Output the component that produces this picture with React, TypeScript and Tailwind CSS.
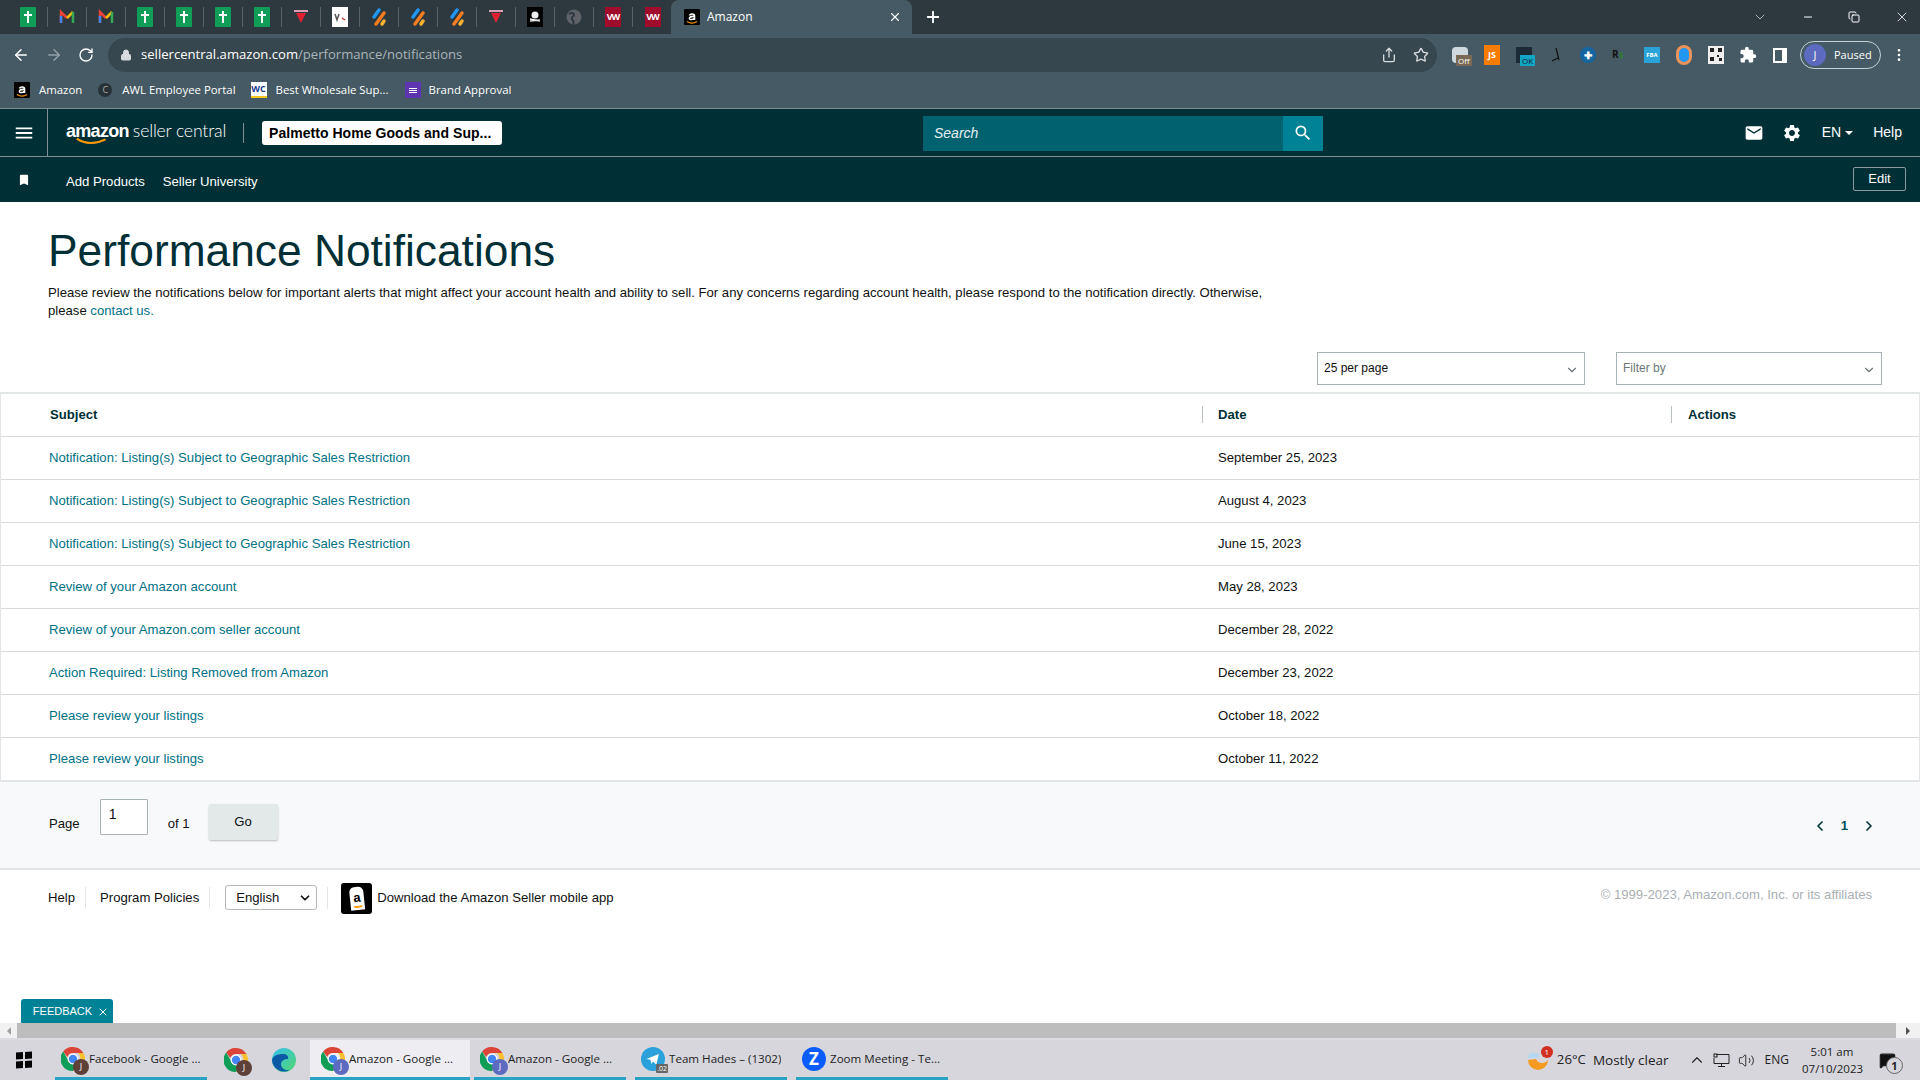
import React from "react";
import {
  ArrowLeft,
  ArrowRight,
  RotateCw,
  Lock,
  Star,
  Share,
  ChevronDown,
  ChevronLeft,
  ChevronRight,
  ChevronUp,
  Minus,
  X,
  Plus,
  Copy,
  MoreVertical,
  Volume2,
  MessageSquare,
} from "lucide-react";
import { MdBookmark, MdEmail, MdExtension, MdMenu, MdSearch, MdSettings } from "react-icons/md";

const ROWS = [
  ["Notification: Listing(s) Subject to Geographic Sales Restriction", "September 25, 2023"],
  ["Notification: Listing(s) Subject to Geographic Sales Restriction", "August 4, 2023"],
  ["Notification: Listing(s) Subject to Geographic Sales Restriction", "June 15, 2023"],
  ["Review of your Amazon account", "May 28, 2023"],
  ["Review of your Amazon.com seller account", "December 28, 2022"],
  ["Action Required: Listing Removed from Amazon", "December 23, 2022"],
  ["Please review your listings", "October 18, 2022"],
  ["Please review your listings", "October 11, 2022"],
];

const TABS = ["sheet", "gmail", "gmail", "sheet", "sheet", "sheet", "sheet", "tri", "doc", "stripe", "stripe", "stripe", "tri", "skull", "globe", "vw", "vw"];

const AmazonFavicon = ({ size = 16 }: { size?: number }) => (
  <div className="flex items-center justify-center bg-black shrink-0 rounded-[1px]" style={{ width: size, height: size }}>
    <svg viewBox="0 0 16 16" className="w-full h-full">
      <path d="M5.5 6.5c.5-2 5-2.2 5 .3v4.200M10.500 7.500c-4-.5-5.500 1-5 2.300.5 1.200 3.800 1 5-1" fill="none" stroke="#fff" strokeWidth="1.600" />
      <path d="M3 12.500c3 2 7 2 10 0" fill="none" stroke="#f90" strokeWidth="1.200" />
    </svg>
  </div>
);

const TabIcon = ({ kind }: { kind: string }) => {
  if (kind === "sheet")
    return (
      <div className="w-4 h-5 bg-[#0f9d58] rounded-[1px] flex items-center justify-center">
        <svg viewBox="0 0 16 20" className="w-4 h-5">
          <path d="M4 8h8M8 4v12" stroke="#fff" strokeWidth="2" />
        </svg>
      </div>
    );
  if (kind === "gmail")
    return (
      <svg viewBox="0 0 16 14" className="w-4 h-4">
        <path d="M2 13V2l6 6" fill="none" stroke="#ea4335" strokeWidth="2.500" />
        <path d="M8 8l6-6" fill="none" stroke="#fbbc04" strokeWidth="2.500" />
        <path d="M14 2v11" stroke="#34a853" strokeWidth="2.500" />
        <path d="M2 6v7" stroke="#4285f4" strokeWidth="2.500" />
      </svg>
    );
  if (kind === "tri")
    return (
      <svg viewBox="0 0 16 16" className="w-4 h-4">
        <rect x="1" y="1" width="14" height="2" fill="#d8a0b0" />
        <path d="M3 4h10l-5 10z" fill="#e02030" />
      </svg>
    );
  if (kind === "doc")
    return (
      <div className="w-4 h-5 bg-white flex items-center justify-center">
        <svg viewBox="0 0 16 20" className="w-4 h-5">
          <path d="M3 7l2 6 2-6" fill="none" stroke="#555" strokeWidth="1.500" />
          <path d="M10 11l3 2" stroke="#c33" strokeWidth="1.500" />
        </svg>
      </div>
    );
  if (kind === "stripe")
    return (
      <svg viewBox="0 0 16 20" className="w-4 h-5">
        <path d="M3 10l5-7" stroke="#2196f3" strokeWidth="3.500" strokeLinecap="round" />
        <path d="M5 17l8-11" stroke="#f57c20" strokeWidth="3.500" strokeLinecap="round" />
        <path d="M11 17l2-3" stroke="#f9b233" strokeWidth="3.500" strokeLinecap="round" />
      </svg>
    );
  if (kind === "skull")
    return (
      <div className="w-4 h-5 bg-black flex items-center justify-center">
        <svg viewBox="0 0 16 20" className="w-4 h-5">
          <circle cx="8" cy="8" r="3.500" fill="#eee" />
          <path d="M3 14l10-1M3 12l10 2" stroke="#eee" strokeWidth="1.500" />
        </svg>
      </div>
    );
  if (kind === "globe")
    return (
      <svg viewBox="0 0 16 16" className="w-4 h-4">
        <circle cx="8" cy="8" r="7.500" fill="#5f6368" />
        <path d="M3 5c3-2 5-1 5 1s-3 1-2 4 3 3 1 5" fill="none" stroke="#2d393f" strokeWidth="2" />
      </svg>
    );
  return (
    <div className="w-4 h-5 bg-[#a00d2c] flex items-center justify-center text-[9px] font-bold tracking-[-1px] text-white">VW</div>
  );
};

const ChromeIcon = ({ badge = "#5c6bc0" }: { badge?: string }) => (
  <div className="relative w-6 h-6 shrink-0">
    <svg viewBox="0 0 24 24" className="w-6 h-6">
      <path d="M12 0a12 12 0 0 1 10.400 6H12a6 6 0 0 0-5.700 4L2.200 4.500A12 12 0 0 1 12 0z" fill="#db4437" />
      <path d="M22.400 6A12 12 0 0 1 12 24l5-8.500a6 6 0 0 0 0-9.500z" fill="#fbc02d" />
      <path d="M2.200 4.500L7 13a6 6 0 0 0 10 2.500L12 24A12 12 0 0 1 2.200 4.500z" fill="#0f9d58" />
      <circle cx="12" cy="12" r="4.800" fill="#4285f4" stroke="#fff" strokeWidth="1.200" />
    </svg>
    <div className="absolute -right-1 -bottom-1 w-4 h-4 rounded-full flex items-center justify-center text-[9px] text-white" style={{ backgroundColor: badge }}>J</div>
  </div>
);

const TaskItem = ({ w, pl, active, icon, label }: { w: string; pl: string; active?: boolean; icon: React.ReactNode; label: string }) => (
  <div className={`${w} ${pl} ${active ? "bg-[#eeeef2]" : ""} h-10 flex items-center gap-[4px] border-b-[3px] border-[#29a3c4] shrink-0`}>
    {icon}
    <span className="text-[11.600px] text-[#222] whitespace-nowrap overflow-hidden">{label}</span>
  </div>
);

const BrowserChrome = () => (
  <div className="shrink-0 font-['Open_Sans',sans-serif]">
    {/* tab strip */}
    <div className="h-[34px] bg-[#2d393f] flex items-center pl-[9px] text-white">
      <div className="flex items-center h-full">
        {TABS.map((kind, i) => (
          <div key={i} className="w-[39px] h-[20px] flex items-center justify-center border-r border-[#55646b] last:border-r-0">
            <TabIcon kind={kind} />
          </div>
        ))}
      </div>
      <div className="w-[241px] -ml-px h-full bg-[#455a64] rounded-t-lg flex items-center pl-[13px] pr-[10px] gap-[7px]">
        <AmazonFavicon />
        <span className="text-xs flex-1">Amazon</span>
        <X className="w-3.5 h-3.5" />
      </div>
      <Plus className="w-[18px] h-[18px] ml-3" strokeWidth={2.500} />
      <div className="ml-auto flex items-center gap-[34px] pr-[10px]">
        <ChevronDown className="w-4 h-4 text-[#c8d0d4]" strokeWidth={1.200} />
        <Minus className="w-3 h-3" />
        <Copy className="w-3 h-3" />
        <X className="w-4 h-4" strokeWidth={1.200} />
      </div>
    </div>
    {/* address row */}
    <div className="h-[38px] bg-[#455a64] flex items-end text-white">
      <div className="flex items-center h-[34px] pl-[12px] gap-[15px] w-[108px]">
        <ArrowLeft className="w-[18px] h-[18px]" />
        <ArrowRight className="w-[18px] h-[18px] text-[#93a1a8]" />
        <RotateCw className="w-4 h-4" />
      </div>
      <div className="w-[1329px] h-[34px] bg-[#37474f] rounded-full flex items-center pl-[12px] pr-[8px]">
        <Lock className="w-3 h-3 text-[#d5dbde] mr-[9px]" fill="#d5dbde" />
        <span className="text-[13.100px]">sellercentral.amazon.com<span className="text-[#a9b5ba]">/performance/notifications</span></span>
        <div className="ml-auto flex items-center gap-[16px]">
          <Share className="w-4 h-4 text-[#d5dbde]" />
          <Star className="w-4 h-4 text-[#d5dbde]" />
        </div>
      </div>
      <div className="flex-1 h-[34px] flex items-center pl-[15px] gap-[16px]">
        <div className="relative w-4 h-4 rounded-sm bg-[#cfd8dc] shrink-0">
          <div className="absolute left-1 top-[8px] bg-[#7a6a55] text-[8px] leading-[11px] px-[2px]">Off</div>
        </div>
        <div className="w-4 h-5 bg-[#f57c00] text-[9px] font-bold flex items-center justify-center shrink-0">JS</div>
        <div className="relative w-4 h-4 bg-[#1c2a35] shrink-0">
          <div className="absolute left-1 top-[8px] bg-[#12a5c4] text-[#123] text-[8px] leading-[11px] px-[2px]">OK</div>
        </div>
        <svg viewBox="0 0 16 16" className="w-4 h-4 shrink-0"><path d="M8 1l3 12M4 14l6-3" stroke="#111" strokeWidth="1.200" /></svg>
        <div className="w-4 h-4 rounded-full bg-[#1565a0] text-[10px] leading-4 text-center font-bold shrink-0">✚</div>
        <div className="w-4 h-4 text-[#111] text-[10px] font-bold shrink-0">R<span className="text-[#2e7d32]">s</span></div>
        <div className="w-4 h-4 bg-[#29a3d8] text-[6px] leading-4 text-center font-bold shrink-0">FBA</div>
        <div className="w-4 h-5 rounded-full bg-[#2196f3] border-[3px] border-[#e8935a] shrink-0" />
        <svg viewBox="0 0 16 18" className="w-4 h-[18px] shrink-0">
          <rect width="16" height="18" fill="#eee" />
          <path d="M2 2h4v4H2zM10 2h4v4h-4zM2 11h4v4H2zM9 9h2v2H9zM11 12h3v3h-3z" fill="#222" />
        </svg>
        <MdExtension className="w-[18px] h-[18px] shrink-0 -ml-px" />
        <div className="w-[14px] h-[15px] border-2 border-white border-r-[5px] shrink-0" />
        <div className="w-[81px] h-[28px] border border-[#c5d3d8] rounded-full flex items-center pl-[3px] gap-2 text-[11px] shrink-0 -ml-[3px]">
          <div className="w-[22px] h-[22px] rounded-full bg-[#5c6bc0] flex items-center justify-center">J</div>
          Paused
        </div>
        <MoreVertical className="w-4 h-4 shrink-0 -ml-[6px]" />
      </div>
    </div>
    {/* bookmarks */}
    <div className="h-[36px] bg-[#455a64] flex items-center pl-[14px] text-[11.400px] text-white">
      <AmazonFavicon />
      <span className="ml-[9px]">Amazon</span>
      <div className="ml-[16px] w-[14px] h-[14px] rounded-full bg-[#263238] text-[9px] text-center leading-[14px] text-[#aaa]">C</div>
      <span className="ml-[10px]">AWL Employee Portal</span>
      <div className="ml-[15px] w-4 h-4 bg-white text-[#1a3a8f] text-[9px] font-bold leading-[14px] text-center border-b-2 border-[#f5c518]">WC</div>
      <span className="ml-[9px]">Best Wholesale Sup...</span>
      <div className="ml-[16px] w-4 h-4 bg-[#5e35b1] flex flex-col justify-center items-center gap-px">
        <div className="w-2 h-px bg-white" />
        <div className="w-2 h-px bg-white" />
        <div className="w-2 h-px bg-white" />
      </div>
      <span className="ml-[8px]">Brand Approval</span>
    </div>
  </div>
);

const SellerHeader = () => (
  <div className="shrink-0 bg-[#002f36] text-white border-t border-[#7f9096]">
    <div className="h-[48px] flex items-center border-b border-[#7f9096]">
      <div className="w-[48px] h-full flex items-center justify-center border-r border-[#7f9096]">
        <MdMenu className="w-[22px] h-[22px]" />
      </div>
      <div className="relative ml-[18px] w-[160px] h-[28px] flex items-baseline whitespace-nowrap leading-[24px]">
        <span className="text-[18px] font-bold tracking-[-0.7px]">amazon</span>
        <span className="text-[17.700px] font-['Lato',sans-serif] font-light ml-[4px] tracking-[-0.2px]">seller central</span>
        <svg viewBox="0 0 40 10" className="absolute left-[9px] top-[18px] w-[34px] h-[8px]">
          <path d="M1 2c10 7 24 7 36 1" fill="none" stroke="#f90" strokeWidth="2.500" />
        </svg>
      </div>
      <div className="w-px h-5 bg-[#7f9096] ml-[17px]" />
      <div className="ml-[18px] w-[240px] h-[24px] mt-px bg-white rounded-[3px] text-black text-[14px] font-bold flex items-center pl-[7px] tracking-[0.05px] whitespace-nowrap">Palmetto Home Goods and Sup...</div>
      <div className="ml-[421px] w-[400px] h-[35px] mt-px flex">
        <div className="flex-1 bg-[#00626f] text-[14px] italic text-[#e6f0f2] flex items-center pl-[11px]">Search</div>
        <div className="w-[40px] bg-[#008296] flex items-center justify-center">
          <MdSearch className="w-[20px] h-[20px]" />
        </div>
      </div>
      <div className="ml-auto flex items-center text-[14px] pr-[18px]">
        <MdEmail className="w-[20px] h-[20px]" />
        <MdSettings className="w-[20px] h-[20px] ml-[18px]" />
        <span className="ml-[20px]">EN</span>
        <div className="ml-[4px] w-0 h-0 border-x-[4px] border-x-transparent border-t-[4px] border-t-white" />
        <span className="ml-[20px]">Help</span>
      </div>
    </div>
    <div className="h-[45px] flex items-center">
      <MdBookmark className="w-[14px] h-[14px] ml-[17px]" />
      <span className="ml-[35px] mt-[5px] text-[13.130px] whitespace-nowrap">Add Products</span>
      <span className="ml-[18px] mt-[5px] text-[13.130px] whitespace-nowrap">Seller University</span>
      <div className="ml-auto mr-[14px] -mt-[1px] w-[53px] h-[24px] border border-[#8a9ba0] rounded-[2px] flex items-center justify-center text-[13px]">Edit</div>
    </div>
  </div>
);

const FilterSelect = ({ label, muted, w }: { label: string; muted?: boolean; w: string }) => (
  <div className={`${w} h-[33px] border border-[#a6b2b4] flex items-center pl-[6px] pr-[5px] text-[12px] ${muted ? "text-[#6c7778]" : "text-[#0f1111]"}`}>
    <span className="-mt-[2px]">{label}</span>
    <ChevronDown className="w-[14px] h-[14px] ml-auto mt-[3px] text-[#6c7778]" />
  </div>
);

const Table = () => (
  <div className="border-y-2 border-[#e3e6e6] border-x border-x-[#e3e6e6]">
    <div className="h-[43px] pb-[2px] grid grid-cols-[1201px_469px_1fr] items-center font-bold text-[#002f36] text-[13.130px] leading-[17px] border-b border-[#d5d9d9]">
      <div className="pl-[49px]">Subject</div>
      <div className="pl-[15px] border-l border-[#b8c0c0] h-[17px]">Date</div>
      <div className="pl-[16px] border-l border-[#b8c0c0] h-[17px]">Actions</div>
    </div>
    {ROWS.map((row, i) => (
      <div key={i} className="h-[43px] last:h-[42px] grid grid-cols-[1201px_469px_1fr] items-center text-[13.130px] border-b border-[#d5d9d9] last:border-b-0">
        <a className="pl-[48px] text-[#007185]">{row[0]}</a>
        <div className="pl-[16px] text-[#0f1111]">{row[1]}</div>
        <div />
      </div>
    ))}
  </div>
);

const Pager = () => (
  <div className="h-[88px] bg-[#f8f9fa] border-b-2 border-[#e3e6e6] flex items-start text-[13.130px] text-[#0f1111]">
    <span className="ml-[49px] mt-[32px]">Page</span>
    <div className="ml-[20px] mt-[17px] w-[48px] h-[36px] bg-white border border-[#a6b2b4] rounded-[1px] pl-[8px] pt-[4px] text-[14px]">1</div>
    <span className="ml-[20px] mt-[32px]">of 1</span>
    <div className="ml-[19px] mt-[22px] w-[69px] h-[36px] bg-[#e3e9e9] rounded-[2px] shadow-[0_1px_2px_rgba(0,0,0,.25)] flex items-center justify-center">Go</div>
    <div className="ml-auto mr-[43px] mt-[34px] flex items-center text-[#002f36]">
      <ChevronLeft className="w-4 h-4" strokeWidth={2.500} />
      <span className="mx-[13px] font-bold text-[#00505c]">1</span>
      <ChevronRight className="w-4 h-4" strokeWidth={2.500} />
    </div>
  </div>
);

const PageFooter = () => (
  <div className="flex items-start text-[13.130px] text-[#0f1111]">
    <div className="ml-[48px] mt-[17px] flex items-center h-[22px]">
      <span className="pr-[10px] border-r border-[#e3e6e6] leading-[22px]">Help</span>
      <span className="pl-[14px] pr-[10px] border-r border-[#e3e6e6] leading-[22px]">Program Policies</span>
    </div>
    <div className="ml-[15px] mt-[15px] w-[92px] h-[25px] border border-[#b5b9b9] rounded-[3px] flex items-center pl-[10px] pr-[4px]">
      English
      <ChevronDown className="w-[14px] h-[14px] ml-auto" strokeWidth={3} />
    </div>
    <div className="ml-[10px] mt-[17px] w-px h-[22px] bg-[#e3e6e6]" />
    <div className="ml-[13px] mt-[13px] w-[31px] h-[31px] bg-black rounded-[3px] flex items-center justify-center">
      <div className="w-[14px] h-[23px] bg-white rotate-[-6deg] rounded-t-[5px] flex flex-col items-center justify-end text-black font-bold text-[13px] leading-[14px]">
        a
        <div className="w-[9px] h-[3px] border-b-2 border-[#f90] rounded-b-full mb-[2px]" />
      </div>
    </div>
    <span className="ml-[5px] mt-[18px]">Download the Amazon Seller mobile app</span>
    <span className="ml-auto mr-[48px] mt-[15px] text-[#aab0b3]">© 1999-2023, Amazon.com, Inc. or its affiliates</span>
  </div>
);

const Taskbar = () => (
  <div className="h-[40px] shrink-0 bg-[#d6d6dc] flex items-center font-['Open_Sans',sans-serif]">
    <div className="w-[55px] flex items-center justify-center shrink-0 pr-[7px]">
      <div className="grid grid-cols-2 gap-[2px] skew-y-[-4deg]">
        <div className="w-[7px] h-[7px] bg-black" />
        <div className="w-[7px] h-[7px] bg-black" />
        <div className="w-[7px] h-[7px] bg-black" />
        <div className="w-[7px] h-[7px] bg-black" />
      </div>
    </div>
    <TaskItem w="w-[152px]" pl="pl-[6px]" icon={<ChromeIcon badge="#5d4037" />} label="Facebook - Google ..." />
    <div className="w-[103px] flex items-center shrink-0 pl-[17px] gap-[24px]">
      <ChromeIcon badge="#5d4037" />
      <svg viewBox="0 0 24 24" className="w-6 h-6">
        <defs>
          <linearGradient id="edge" x1="0" y1="0" x2="1" y2="1">
            <stop offset="0" stopColor="#35c1f1" />
            <stop offset="1" stopColor="#52d66e" />
          </linearGradient>
        </defs>
        <circle cx="12" cy="12" r="12" fill="url(#edge)" />
        <path d="M0 12a12 12 0 0 0 18 10c-5 1-9-2-9-6 0-3 3-5 7-5 1-3-2-5-5-5C5 6 1 8 0 12z" fill="#0c59a4" />
      </svg>
    </div>
    <TaskItem w="w-[160px]" pl="pl-[11px]" active icon={<ChromeIcon />} label="Amazon - Google ..." />
    <div className="w-1 shrink-0" />
    <TaskItem w="w-[152px]" pl="pl-[6px]" icon={<ChromeIcon />} label="Amazon - Google ..." />
    <div className="w-[9px] shrink-0" />
    <TaskItem
      w="w-[152px]"
      pl="pl-[6px]"
      icon={
        <div className="relative w-6 h-6 rounded-full bg-[#2aa1da] shrink-0 flex items-center justify-center">
          <svg viewBox="0 0 24 24" className="w-5 h-5"><path d="M4 12l15-6-3 13-4-4-2 3-1-5z" fill="#fff" /></svg>
          <div className="absolute -right-[3px] -bottom-[2px] bg-[#666] text-white text-[7px] leading-[9px] px-[1px] rounded-[1px]">.02</div>
        </div>
      }
      label="Team Hades – (1302)"
    />
    <div className="w-[9px] shrink-0" />
    <TaskItem
      w="w-[152px]"
      pl="pl-[6px]"
      icon={<div className="w-6 h-6 rounded-full bg-[#0b5cff] text-white font-bold text-[17px] leading-6 text-center shrink-0">Z</div>}
      label="Zoom Meeting - Te..."
    />
    <div className="ml-auto flex items-center text-[#222] h-full">
      <div className="relative w-[24px] h-[24px] mr-[7px]">
        <svg viewBox="0 0 24 24" className="w-6 h-6">
          <path d="M2 12a10 10 0 0 0 20 0c-3 4-10 4-12-1z" fill="#f59a23" />
          <path d="M2 9c0-3 3-5 6-4 2-1 5 0 5 3v2H2z" fill="#b5d8f0" />
        </svg>
        <div className="absolute -right-[3px] -top-[2px] w-[12px] h-[12px] rounded-full bg-[#d32f20] text-white text-[8px] leading-[12px] text-center">1</div>
      </div>
      <span className="text-[13.200px]">26°C</span>
      <span className="text-[13.500px] ml-[7px]">Mostly clear</span>
      <ChevronUp className="w-[18px] h-[18px] ml-[19px]" strokeWidth={1.500} />
      <svg viewBox="0 0 17 17" className="w-[17px] h-[17px] ml-[7px]" fill="none" stroke="#222" strokeWidth="1">
        <path d="M3 2.500h13v9H1V6M8.500 11.500v3M5 14.500h7" />
        <rect x="1" y="2" width="3" height="3" />
      </svg>
      <Volume2 className="w-[17px] h-[17px] ml-[8px]" strokeWidth={1.300} />
      <span className="text-[12px] ml-[10px]">ENG</span>
      <div className="ml-[13px] w-[60px] text-center text-[11.500px] leading-[17px]">
        <div>5:01 am</div>
        <div>07/10/2023</div>
      </div>
      <div className="relative ml-[17px] mr-[24px]">
        <MessageSquare className="w-[17px] h-[17px]" fill="#111" />
        <div className="absolute left-[7px] top-[5px] w-[17px] h-[17px] rounded-full border border-[#666] bg-[#d6d6dc] text-[11px] font-bold leading-[15px] text-center">1</div>
      </div>
    </div>
  </div>
);

const App: React.FC = () => {
  return (
    <div className="relative h-screen w-full overflow-hidden flex flex-col bg-white font-['Liberation_Sans',Arial,sans-serif]">
      <BrowserChrome />
      <SellerHeader />

      <div className="flex-1 min-h-0">
        <h1 className="ml-[48px] mt-[24px] text-[44.300px] leading-[50px] text-[#002f36]">Performance Notifications</h1>
        <p className="ml-[48px] mt-[8px] w-[1240px] text-[13.130px] leading-[18px] text-[#0f1111]">
          Please review the notifications below for important alerts that might affect your account health and ability to sell. For any concerns regarding account health, please respond to the notification directly. Otherwise, please <a className="text-[#007185]">contact us.</a>
        </p>
        <div className="flex justify-end gap-[31px] pr-[38px] mt-[32px] mb-[7px]">
          <FilterSelect w="w-[268px]" label="25 per page" />
          <FilterSelect w="w-[266px]" label="Filter by" muted />
        </div>
        <Table />
        <Pager />
        <PageFooter />
      </div>

      {/* scrollbar */}
      <div className="h-[17px] shrink-0 bg-[#f1f1f1] flex items-center border-b-2 border-[#dcdce0]">
        <div className="w-[17px] flex justify-center"><div className="w-0 h-0 border-y-[4px] border-y-transparent border-r-[4px] border-r-[#a0a0a0]" /></div>
        <div className="flex-1 h-full bg-[#bdbdbd]" />
        <div className="w-[24px] flex justify-center"><div className="w-0 h-0 border-y-[4px] border-y-transparent border-l-[4px] border-l-[#505050]" /></div>
      </div>
      <Taskbar />

      {/* feedback tab sits over the page */}
      <div className="absolute left-[21px] bottom-[57px] w-[92px] h-[24px] pl-[8px] pt-px bg-[#008296] rounded-t-[3px] text-white text-[11px] flex items-center justify-center gap-[5px]">
        FEEDBACK
        <X className="w-3 h-3" />
      </div>
    </div>
  );
};

export default App;
